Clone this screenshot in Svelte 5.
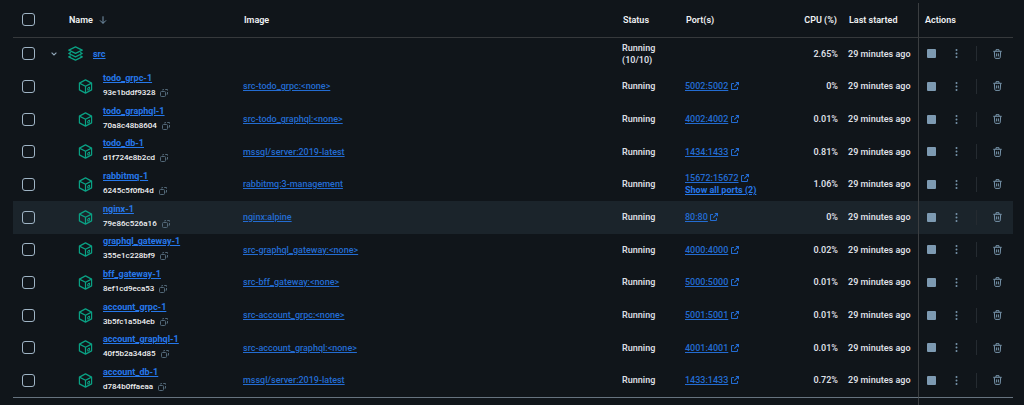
<script>
  const stack = { name: 'src', status: 'Running (10/10)', cpu: '2.65%', started: '29 minutes ago' };

  const containers = [
    { name: 'todo_grpc-1', id: '93e1bddf9328', image: 'src-todo_grpc:<none>', port: '5002:5002', cpu: '0%' },
    { name: 'todo_graphql-1', id: '70a8c48b8604', image: 'src-todo_graphql:<none>', port: '4002:4002', cpu: '0.01%' },
    { name: 'todo_db-1', id: 'd1f724e8b2cd', image: 'mssql/server:2019-latest', port: '1434:1433', cpu: '0.81%' },
    { name: 'rabbitmq-1', id: '6245c5f0fb4d', image: 'rabbitmq:3-management', port: '15672:15672', portCount: 2, cpu: '1.06%' },
    { name: 'nginx-1', id: '79e86c526a16', image: 'nginx:alpine', port: '80:80', cpu: '0%' },
    { name: 'graphql_gateway-1', id: '355e1c228bf9', image: 'src-graphql_gateway:<none>', port: '4000:4000', cpu: '0.02%' },
    { name: 'bff_gateway-1', id: '8ef1cd9eca53', image: 'src-bff_gateway:<none>', port: '5000:5000', cpu: '0.01%' },
    { name: 'account_grpc-1', id: '3b5fc1a5b4eb', image: 'src-account_grpc:<none>', port: '5001:5001', cpu: '0.01%' },
    { name: 'account_graphql-1', id: '40f5b2a34d85', image: 'src-account_graphql:<none>', port: '4001:4001', cpu: '0.01%' },
    { name: 'account_db-1', id: 'd784b0ffaeaa', image: 'mssql/server:2019-latest', port: '1433:1433', cpu: '0.72%' }
  ];

  let selected = $state([]);
  let expanded = $state(true);
  let active = $state('nginx-1');

  const allSelected = $derived(selected.length === containers.length);

  function toggleAll() {
    selected = allSelected ? [] : containers.map((c) => c.name);
  }
</script>

{#snippet actions(name)}
  <div class="actions">
    <button type="button" class="stop" aria-label="Stop {name}"></button>
    <button type="button" class="more" aria-label="More actions for {name}">
      <svg width="3" height="9" viewBox="0 0 3 9" fill="currentColor">
        <circle cx="1.5" cy="1" r="1" /><circle cx="1.5" cy="4.5" r="1" /><circle cx="1.5" cy="8" r="1" />
      </svg>
    </button>
    <span class="divider"></span>
    <button type="button" aria-label="Delete {name}">
      <svg width="9" height="10" viewBox="0 0 9 10" fill="none" stroke="currentColor" stroke-width="1">
        <path d="M0.3 2.3h8.4M3 2.1V0.7h3v1.4M1.3 2.4l0.5 6.2q0.1 0.8 0.9 0.8h3.6q0.8 0 0.9-0.8l0.5-6.2M3.6 4.4v3M5.4 4.4v3" />
      </svg>
    </button>
  </div>
{/snippet}

<main>
  <table>
    <colgroup>
      <col class="col-check" />
      <col class="col-name" />
      <col />
      <col class="col-status" />
      <col class="col-ports" />
      <col class="col-cpu" />
      <col class="col-started" />
      <col class="col-actions" />
    </colgroup>
    <thead>
      <tr>
        <th class="check"><input type="checkbox" aria-label="Select all" checked={allSelected} onchange={toggleAll} /></th>
        <th class="name-head">
          Name
          <svg width="8" height="8" viewBox="0 0 8 8" fill="none" stroke="currentColor" stroke-width="1">
            <path d="M4 0.3v7M1 4.4l3 3 3-3" />
          </svg>
        </th>
        <th>Image</th>
        <th>Status</th>
        <th>Port(s)</th>
        <th class="cpu">CPU (%)</th>
        <th class="started">Last started</th>
        <th class="last">Actions</th>
      </tr>
    </thead>
    <tbody>
      <tr>
        <td class="check"><input type="checkbox" aria-label="Select {stack.name}" checked={allSelected} onchange={toggleAll} /></td>
        <td>
          <div class="stack">
            <button type="button" class="chevron" aria-label="Toggle {stack.name}" onclick={() => (expanded = !expanded)}>
              <svg width="6" height="4" viewBox="0 0 6 4" fill="none" stroke="currentColor" stroke-width="1.1"><path d="M0.6 0.6L3 3l2.4-2.4" /></svg>
            </button>
            <svg class="green" width="15" height="15" viewBox="0 0 15 15" fill="none" stroke="currentColor" stroke-width="1.3" stroke-linejoin="round">
              <path d="M7.5 0.8L14.2 4.1 7.5 7.4 0.8 4.1z" />
              <path d="M2.8 6.4L0.8 7.5l6.7 3.3 6.7-3.3-2-1.1" />
              <path d="M2.8 9.8L0.8 10.9l6.7 3.3 6.7-3.3-2-1.1" />
            </svg>
            <a href="#{stack.name}" class="title">{stack.name}</a>
          </div>
        </td>
        <td></td>
        <td class="stack-status">{stack.status}</td>
        <td></td>
        <td class="cpu">{stack.cpu}</td>
        <td class="started">{stack.started}</td>
        <td class="last">{@render actions(stack.name)}</td>
      </tr>
      {#if expanded}
        {#each containers as c (c.name)}
          <tr class:active={active === c.name} onmouseenter={() => (active = c.name)}>
            <td class="check"><input type="checkbox" aria-label="Select {c.name}" value={c.name} bind:group={selected} /></td>
            <td>
              <div class="container">
                <svg class="green" width="15" height="15" viewBox="0 0 15 15" fill="none" stroke="currentColor" stroke-width="1.2" stroke-linejoin="round">
                  <path d="M7.5 0.9L13.6 4.1v6.8L7.5 14.1 1.4 10.9V4.1z" />
                  <path d="M1.4 4.1l6.1 3.2 6.1-3.2M7.5 7.3v6.8" />
                  <path d="M9.8 8.9l1.8-0.9v2.3l-1.8 0.9z" stroke-width="1" />
                </svg>
                <div class="info">
                  <a href="#{c.name}" class="title">{c.name}</a>
                  <div class="id">
                    {c.id}
                    <button type="button" aria-label="Copy {c.id}">
                      <svg width="8" height="8" viewBox="0 0 8 8" fill="none" stroke="currentColor" stroke-width="1">
                        <rect x="0.5" y="2.5" width="5" height="5" rx="1" />
                        <path d="M2.8 1.5V0.5h1.1M5.2 0.5h2.3v1.1M7.5 3v2.2H6.6" />
                      </svg>
                    </button>
                  </div>
                </div>
              </div>
            </td>
            <td><a href="#{c.image}">{c.image}</a></td>
            <td>Running</td>
            <td class="ports">
              <a href="#{c.port}">{c.port}</a>
              <svg width="8" height="8" viewBox="0 0 8 8" fill="none" stroke="currentColor" stroke-width="1.1">
                <path d="M3 1.5H1.3q-0.8 0-0.8 0.8v4.4q0 0.8 0.8 0.8h4.4q0.8 0 0.8-0.8V5M4.8 0.5h2.7v2.7M7.4 0.6L3.3 4.7" />
              </svg>
              {#if c.portCount}
                <button type="button" class="show-all">Show all ports ({c.portCount})</button>
              {/if}
            </td>
            <td class="cpu">{c.cpu}</td>
            <td class="started">29 minutes ago</td>
            <td class="last">{@render actions(c.name)}</td>
          </tr>
        {/each}
      {/if}
    </tbody>
    <tfoot>
      <tr>
        <td colspan="7"></td>
        <td class="last"></td>
      </tr>
    </tfoot>
  </table>
</main>

<style>
  :global(body) { background: #10151a; }
  main { padding: 3px 11px 0 13px; font-family: Roboto, sans-serif; font-size: 9px; line-height: 12px; font-weight: 600; color: #dcdfe2; }
  table { width: 100%; table-layout: fixed; border-collapse: separate; border-spacing: 0; }
  .col-check { width: 36px; }
  .col-name { width: 194px; }
  .col-status { width: 63px; }
  .col-ports { width: 103px; }
  .col-cpu { width: 50px; }
  .col-started { width: 80px; }
  .col-actions { width: 95px; }

  th, td { padding: 0 0 1px; text-align: left; vertical-align: middle; }
  th { height: 33px; font-weight: 600; color: #f0f2f4; border-bottom: 1px solid #36393c; padding-left: 1px; }
  tbody tr { height: 33px; }
  tbody tr:nth-child(3n + 1) { height: 32px; }
  tbody tr.active { background: #1b242b; }
  tfoot td { height: 7px; border-top: 1px solid #66737f; }
  .check { padding-left: 9px; }
  .cpu { text-align: right; white-space: nowrap; }
  .started { padding-left: 10px; white-space: nowrap; }
  .last { padding-left: 8px; border-left: 1px solid #3b3e41; }
  th.name-head { padding-left: 20px; }
  th.cpu { padding-right: 1px; }
  th.started { padding-left: 11px; }
  th.last { padding-left: 6px; }
  .name-head svg { margin-left: 4px; vertical-align: -1px; color: #7794ab; }

  input { appearance: none; display: block; width: 13px; height: 13px; margin: 0; border: 1px solid #9fb4c5; border-radius: 3px; }
  input:checked { background: #2471dd; border-color: #2471dd; }
  button { display: block; padding: 0; border: 0; background: none; font: inherit; color: #7794ab; cursor: pointer; }
  button svg { display: block; }
  a { color: #236cd2; font-weight: 500; text-decoration: underline; }
  .title { color: #2678ea; font-weight: 700; }
  .green { flex: none; color: #0aa184; }

  .stack { display: flex; align-items: center; }
  .chevron { margin: 0 12px 0 2px; color: #93a9ba; }
  .stack .title { margin-left: 10px; }
  .stack .green { margin-left: -1px; }
  .container { display: flex; align-items: center; gap: 10px; padding-left: 29px; }
  .info { display: flex; flex-direction: column; align-items: flex-start; gap: 3px; padding-bottom: 2px; }
  .id { display: flex; align-items: center; gap: 5px; font-size: 8px; font-weight: 500; color: #f0f2f4; }
  .id button { color: #536878; }
  .stack-status { padding-right: 20px; }
  .ports { color: #236cd2; }
  .ports svg { vertical-align: -1px; }
  .show-all { color: #2678ea; font-weight: 700; text-decoration: underline; }

  .actions { display: flex; align-items: center; }
  .stop { width: 9px; height: 9px; border-radius: 1px; background: #7d9ab2; }
  .more { margin-left: 19px; }
  .divider { width: 1px; height: 15px; margin: 0 16px 0 18px; background: #252b31; }
</style>
